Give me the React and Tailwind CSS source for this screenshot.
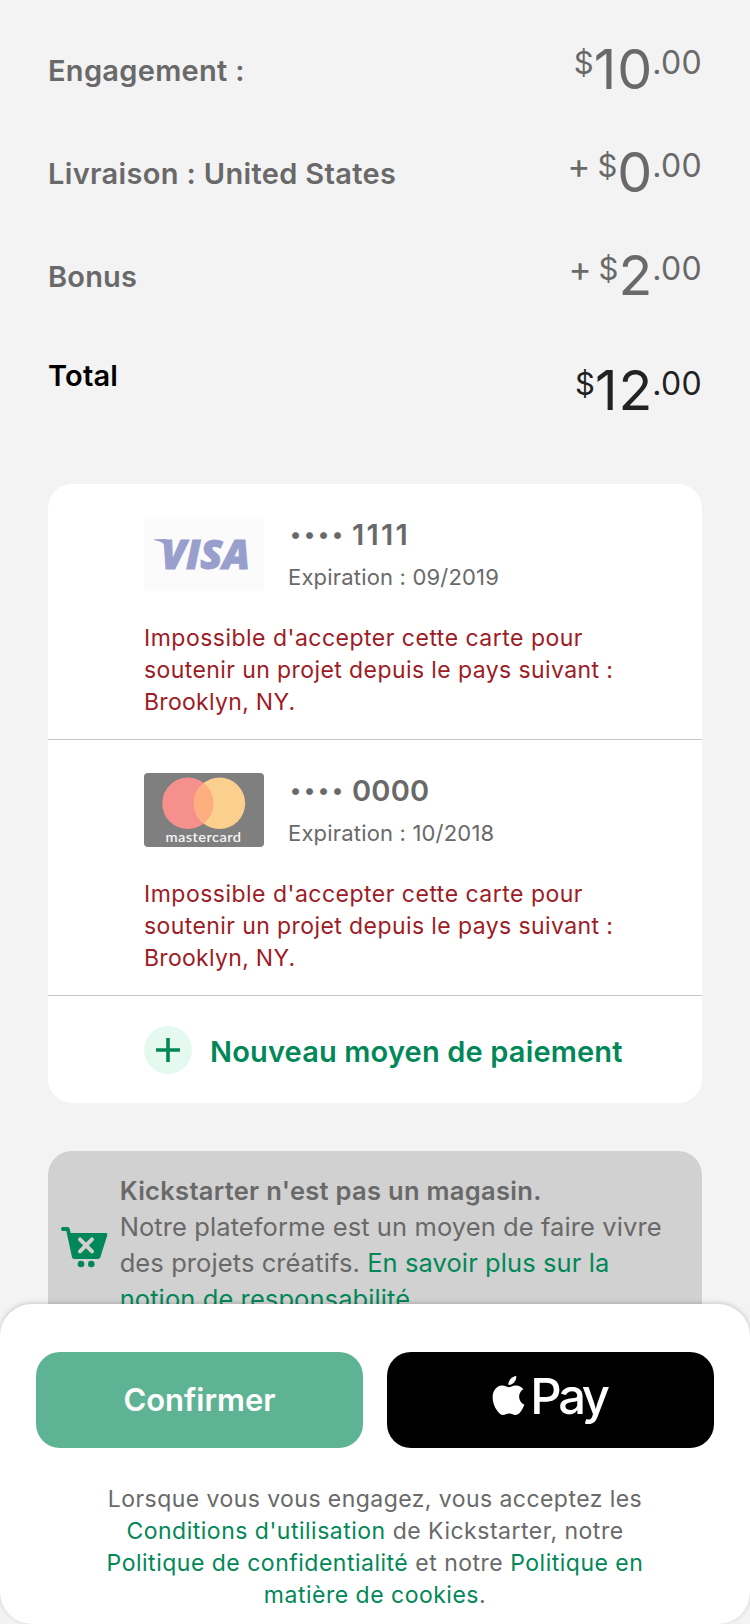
import React from "react";
import { SiApple } from "react-icons/si";

function Price({ plus, whole, className }) {
  return (
    <div className={"flex items-start " + className}>
      {plus && <span className="mr-[7px] text-[35px] leading-[48px]">+</span>}
      <span className="text-[31px] leading-[49px]">$</span>
      <span className="-mr-px text-[55.5px] leading-[61px] tracking-[1px]">{whole}</span>
      <span className="text-[32px] leading-[49px] tracking-[0.3px]">.00</span>
    </div>
  );
}

function VisaLogo() {
  return (
    <svg width="120" height="74" viewBox="0 0 120 74" className="shrink-0">
      <rect width="120" height="74" rx="4" fill="#fbfbfb" />
      <path d="M10 22.3 L21 22 Q23.5 22 24 25 L26 35 C23 28 18 24.5 10 23 Z" fill="#999fcd" />
      <text x="17" y="51.5" textLength="89" lengthAdjust="spacingAndGlyphs" fill="#999fcd" stroke="#999fcd" strokeWidth="1" fontFamily="Open Sans, sans-serif" fontWeight="800" fontStyle="italic" fontSize="41">VISA</text>
    </svg>
  );
}

function MastercardLogo() {
  return (
    <svg width="120" height="74" viewBox="0 0 120 74" className="shrink-0">
      <rect width="120" height="74" rx="4" fill="#7f7f7f" />
      <circle cx="43.9" cy="30.3" r="25.7" fill="#f5908c" />
      <circle cx="75.5" cy="30.3" r="25.7" fill="#fbd08e" />
      <path d="M59.7 10 A25.7 25.7 0 0 1 59.7 50.6 A25.7 25.7 0 0 1 59.7 10 Z" fill="#ffae7f" />
      <text x="21.5" y="69.3" textLength="76" lengthAdjust="spacingAndGlyphs" fill="#f4f4f4" fontFamily="Lato, sans-serif" fontWeight="600" fontSize="14" letterSpacing="0.4">mastercard</text>
    </svg>
  );
}

function SavedCard({ logo, digits, expiration, digitsClass }) {
  return (
    <div className="h-64 border-b border-[#c6c6c6] pt-[33px] pl-24">
      <div className="flex">
        {logo}
        <div className="ml-6 text-[#696969]">
          <div className="flex h-[35px] items-start font-semibold">
            <span className="ml-[2px] w-[62px] text-[22px] leading-[35px] tracking-[2.9px]">••••</span>
            <span className={"text-[29px] leading-[35px] " + digitsClass}>{digits}</span>
          </div>
          <div className="mt-[11px] text-[22px] leading-7 tracking-[0.18px]">Expiration : {expiration}</div>
        </div>
      </div>
      <p className="mt-[31px] text-[23px] leading-8 tracking-[0.49px] whitespace-nowrap text-[#9e1b25]">
        Impossible d'accepter cette carte pour<br />
        <span className="tracking-[0.41px]">soutenir un projet depuis le pays suivant :</span><br />
        <span className="tracking-[0.3px]">Brooklyn, NY.</span>
      </p>
    </div>
  );
}

function CartIcon() {
  return (
    <svg width="46.67" height="40" viewBox="0 0 140 120" className="mt-[76px] ml-[13px] shrink-0 overflow-visible">
      <path d="M5 0 H20 Q25 0 26 5 L29 18 H135 Q141 18 139 24 L118 91 Q116 96 111 96 H40 Q34 96 33 91 L16 12 H5 Q0 11 0 6 Q0 0 5 0 Z" fill="#028858" />
      <path d="M57 37 L93 73 M93 37 L57 73" stroke="#d1d1d1" strokeWidth="12" strokeLinecap="round" />
      <circle cx="60" cy="111" r="10" fill="#028858" />
      <circle cx="91" cy="111" r="10" fill="#028858" />
    </svg>
  );
}

export default function App() {
  return (
    <div className="relative h-[1624px] w-[750px] overflow-hidden bg-[#f3f3f3] px-12 pt-[38px] font-['Inter',sans-serif] text-[#696969]">
      <div className="flex h-[103px] items-start justify-between">
        <span className="mt-[13px] text-[29px] leading-10 font-semibold tracking-[0.3px]">Engagement :</span>
        <Price whole="10" className="" />
      </div>
      <div className="flex h-[103px] items-start justify-between">
        <span className="mt-[13px] text-[29px] leading-10 font-semibold tracking-[0.34px]">Livraison : United States</span>
        <Price plus whole="0" className="" />
      </div>
      <div className="flex h-[103px] items-start justify-between">
        <span className="mt-[13px] text-[29px] leading-10 font-semibold tracking-[0.2px]">Bonus</span>
        <Price plus whole="2" className="" />
      </div>
      <div className="mt-[9px] flex h-[128px] items-start justify-between">
        <span className="text-[29px] leading-10 font-semibold tracking-[0.2px] text-black">Total</span>
        <Price whole="12" className="mt-[3px] text-[#222222]" />
      </div>

      <div className="h-[619px] rounded-3xl bg-white">
        <SavedCard logo={<VisaLogo />} digits="1111" expiration="09/2019" digitsClass="tracking-[2.2px]" />
        <SavedCard logo={<MastercardLogo />} digits="0000" expiration="10/2018" digitsClass="tracking-[0.2px]" />
        <div className="flex items-center pt-[30px] pl-24">
          <div className="flex h-12 w-12 items-center justify-center rounded-full bg-[#e6f9f1]">
            <svg width="24" height="24" viewBox="0 0 24 24">
              <path d="M12 0V24M0 12H24" stroke="#028858" strokeWidth="3.6" />
            </svg>
          </div>
          <span className="mt-[3px] ml-[18px] text-[29px] leading-10 font-semibold tracking-[0.16px] whitespace-nowrap text-[#028858]">Nouveau moyen de paiement</span>
        </div>
      </div>

      <div className="mt-12 flex h-[188px] items-start rounded-3xl bg-[#d1d1d1]">
        <CartIcon />
        <p className="mt-[22px] ml-[12px] text-[25.5px] leading-9 tracking-[0.09px] whitespace-nowrap">
          <span className="font-semibold tracking-[0.3px]">Kickstarter n'est pas un magasin.</span><br />
          Notre plateforme est un moyen de faire vivre<br />
          des projets créatifs. <span className="text-[#028858]">En savoir plus sur la</span><br />
          <span className="text-[#028858]">notion de responsabilité</span>
        </p>
      </div>

      <div className="absolute inset-x-0 bottom-0 h-80 rounded-[32px] bg-white px-9 pt-12 shadow-[0_-1px_5px_rgba(0,0,0,0.18)]">
        <div className="grid grid-cols-2 gap-6">
          <button className="h-24 rounded-3xl bg-[#5fb395] text-[31px] font-semibold text-white">Confirmer</button>
          <button className="flex h-24 items-center justify-center rounded-3xl bg-black pr-[5px] text-white">
            <SiApple className="mr-[2px] -mt-[9px] h-[39px] w-[39px]" />
            <span className="-mt-[6px] text-[49px] leading-[60px] font-medium tracking-[-3.4px]">Pay</span>
          </button>
        </div>
        <p className="mt-[35px] text-center text-[23px] leading-8 tracking-[0.5px] whitespace-nowrap">
          <span className="tracking-[0.44px]">Lorsque vous vous engagez, vous acceptez les</span><br />
          <span className="text-[#028858]">Conditions d'utilisation</span> de Kickstarter, notre<br />
          <span className="text-[#028858]">Politique de confidentialité</span> et notre <span className="text-[#028858]">Politique en</span><br />
          <span className="text-[#028858]">matière de cookies</span>.
        </p>
      </div>
    </div>
  );
}
